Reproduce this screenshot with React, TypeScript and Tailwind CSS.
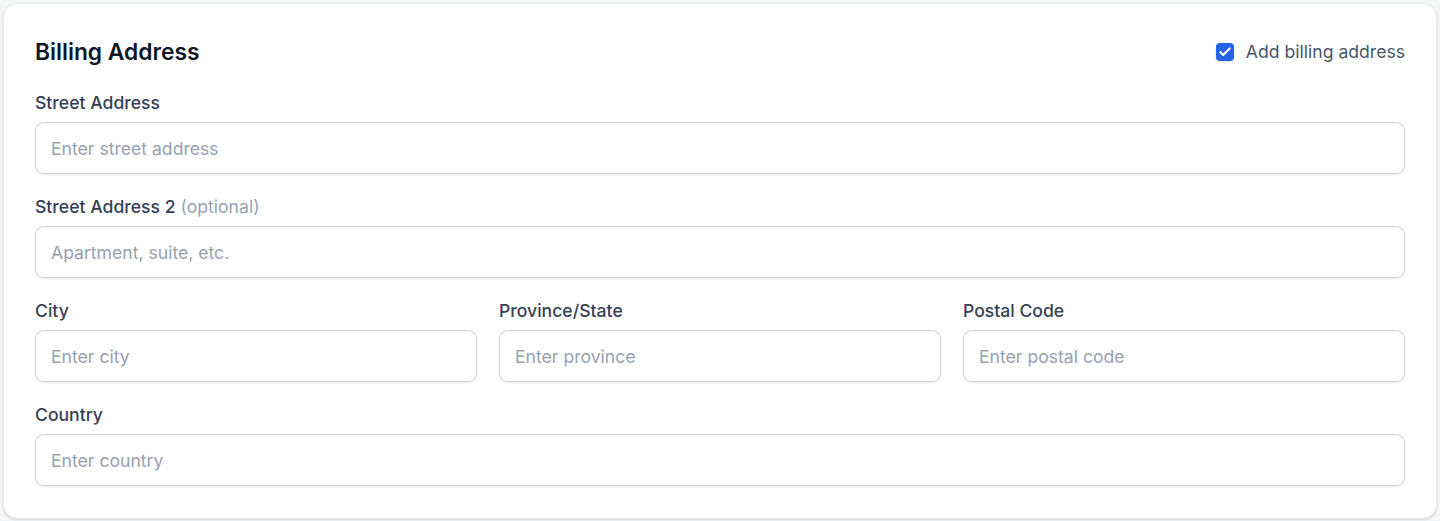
import { Check } from "lucide-react";

type FieldProps = {
    label: string;
    placeholder: string;
    optional?: boolean;
};

function Field({ label, placeholder, optional }: FieldProps) {
    return (
        <div className="flex flex-col">
            <label className="text-[17.6px] leading-[24px] font-medium text-gray-700 mb-[7px]">
                {label}
                {optional && <span className="text-gray-400 font-normal"> (optional)</span>}
            </label>
            <input
                type="text"
                placeholder={placeholder}
                className="h-[52px] w-full rounded-[9px] border border-gray-300 bg-white px-[15px] text-[17.6px] text-gray-800 placeholder:text-gray-400 shadow-[0_1px_3px_rgba(0,0,0,0.1)] outline-none"
            />
        </div>
    );
}

export default function App() {
    return (
        <div className="min-h-[521px] bg-[#f4f5f6] p-[3px] font-['Inter',sans-serif]">
            <div className="bg-white rounded-[14px] border border-gray-200 shadow-sm px-[31px] pt-[31px] pb-[32px] flex flex-col gap-[21px]">
                <div className="flex items-center justify-between h-[35px]">
                    <h2 className="text-[22.8px] font-semibold text-gray-900">Billing Address</h2>
                    <label className="flex items-center gap-3 text-[17.6px] text-gray-600">
                        <span className="w-[18px] h-[18px] rounded-[4px] bg-[#2563eb] flex items-center justify-center shadow-sm">
                            <Check className="w-3.5 h-3.5 text-white" strokeWidth={3.5} />
                        </span>
                        Add billing address
                    </label>
                </div>
                <Field label="Street Address" placeholder="Enter street address" />
                <Field label="Street Address 2" placeholder="Apartment, suite, etc." optional />
                <div className="grid grid-cols-3 gap-[22px]">
                    <Field label="City" placeholder="Enter city" />
                    <Field label="Province/State" placeholder="Enter province" />
                    <Field label="Postal Code" placeholder="Enter postal code" />
                </div>
                <Field label="Country" placeholder="Enter country" />
            </div>
        </div>
    );
}
